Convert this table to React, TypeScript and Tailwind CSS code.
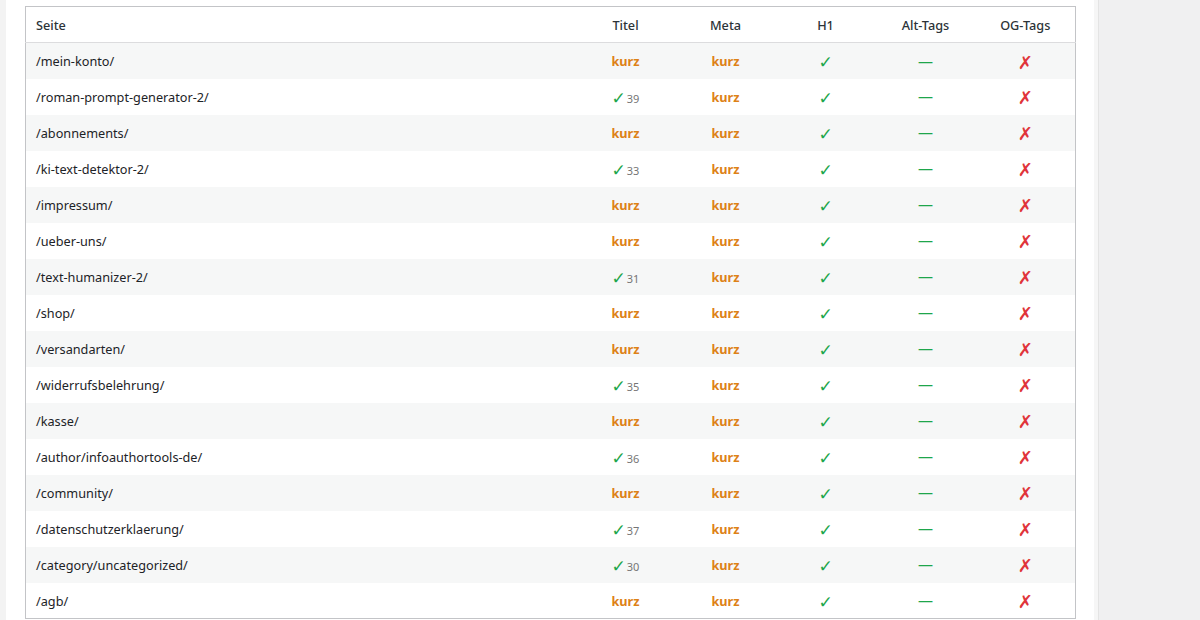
import React from 'react';

type Row = { path: string; titel: number | null };

const rows: Row[] = [
  { path: '/mein-konto/', titel: null },
  { path: '/roman-prompt-generator-2/', titel: 39 },
  { path: '/abonnements/', titel: null },
  { path: '/ki-text-detektor-2/', titel: 33 },
  { path: '/impressum/', titel: null },
  { path: '/ueber-uns/', titel: null },
  { path: '/text-humanizer-2/', titel: 31 },
  { path: '/shop/', titel: null },
  { path: '/versandarten/', titel: null },
  { path: '/widerrufsbelehrung/', titel: 35 },
  { path: '/kasse/', titel: null },
  { path: '/author/infoauthortools-de/', titel: 36 },
  { path: '/community/', titel: null },
  { path: '/datenschutzerklaerung/', titel: 37 },
  { path: '/category/uncategorized/', titel: 30 },
  { path: '/agb/', titel: null },
];

const symbolFont = { fontFamily: '"DejaVu Sans", sans-serif' };

const Kurz = () => <span className="font-bold text-[#dd8117]">kurz</span>;

const Check = () => (
  <span className="inline-block translate-y-[2px] text-[17px] leading-none font-bold text-[#1ea64b]" style={symbolFont}>
    ✓
  </span>
);

const Cross = () => (
  <span className="inline-block translate-y-[2px] text-[18px] leading-none text-[#e0343a]" style={symbolFont}>
    ✗
  </span>
);

const App = () => {
  return (
    <div
      className="flex h-[620px] w-[1200px] overflow-hidden bg-[#f0f0f1] text-[12.7px] text-[#1d2327]"
      style={{ fontFamily: '"Noto Sans", "Open Sans", sans-serif' }}
    >
      <div className="w-[6px] shrink-0 bg-[#f3f3f3]" />
      <div className="w-[1088px] shrink-0 bg-white pl-[19px] pt-[6px]">
        <table className="w-[1050px] table-fixed border-collapse border border-[#c3c4c7]">
          <colgroup>
            <col className="w-[550px]" />
            <col className="w-[100px]" />
            <col className="w-[100px]" />
            <col className="w-[100px]" />
            <col className="w-[100px]" />
            <col className="w-[100px]" />
          </colgroup>
          <thead>
            <tr className="h-[36px] border-b border-[#dcdcde] text-[#2c3338]">
              <th className="px-[10px] pt-[2px] text-left font-medium">Seite</th>
              <th className="pt-[2px] text-center font-medium">Titel</th>
              <th className="pt-[2px] text-center font-medium">Meta</th>
              <th className="pt-[2px] text-center font-medium">H1</th>
              <th className="pt-[2px] text-center font-medium">Alt-Tags</th>
              <th className="pt-[2px] text-center font-medium">OG-Tags</th>
            </tr>
          </thead>
          <tbody>
            {rows.map((r, i) => (
              <tr key={r.path} className={i % 2 === 0 ? 'h-[36px] bg-[#f6f7f7]' : 'h-[36px] bg-white'}>
                <td className="px-[10px] pt-[2px]">{r.path}</td>
                <td className="pt-[2px] text-center">
                  {r.titel === null ? (
                    <Kurz />
                  ) : (
                    <span className="inline-flex items-center gap-[1px]">
                      <Check />
                      <span className="inline-block translate-y-[3px] text-[11px] text-[#757575]">{r.titel}</span>
                    </span>
                  )}
                </td>
                <td className="pt-[2px] text-center">
                  <Kurz />
                </td>
                <td className="pt-[2px] text-center">
                  <Check />
                </td>
                <td className="pt-[2px] text-center">
                  <span className="inline-block -translate-y-[1px] text-[15px] text-[#1ea64b]">—</span>
                </td>
                <td className="pt-[2px] text-center">
                  <Cross />
                </td>
              </tr>
            ))}
          </tbody>
        </table>
      </div>
      <div className="w-[5px] shrink-0 border-r border-[#e4e4e4] bg-[#f6f6f6]" />
      <div className="flex-1" />
    </div>
  );
};

export default App;
